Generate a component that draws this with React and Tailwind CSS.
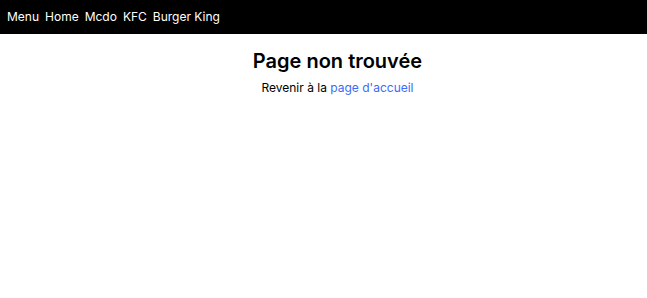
import React from 'react';

const links = ['Menu', 'Home', 'Mcdo', 'KFC', 'Burger King'];

const App = () => {
  return (
    <div className="min-h-screen bg-white font-['Inter',sans-serif]">
      <nav className="flex h-[34px] items-center gap-[6px] bg-black px-[7px] text-[12px] text-white">
        {links.map((l) => (
          <a key={l} href="#">
            {l}
          </a>
        ))}
      </nav>
      <div className="mt-[13px] pl-[28px] text-center">
        <h1 className="text-[20px] font-semibold leading-[28px] text-black">Page non trouvée</h1>
        <p className="mt-[4px] text-[12px] text-black">
          Revenir à la{' '}
          <a href="#" className="text-[#3b6cf6]">
            page d'accueil
          </a>
        </p>
      </div>
    </div>
  );
};

export default App;
